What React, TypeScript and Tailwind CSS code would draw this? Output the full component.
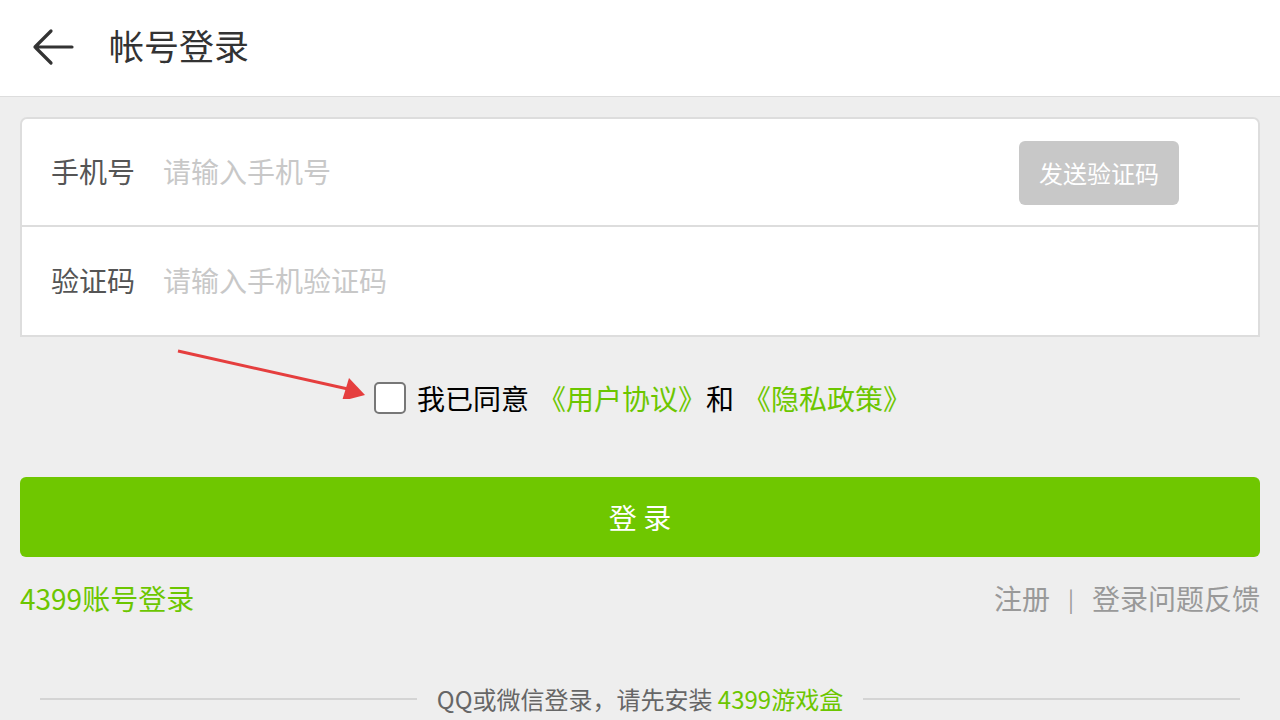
import React, { useState } from 'react';

const font = { fontFamily: '"Noto Sans CJK SC", "Noto Sans", sans-serif' };

const BackArrow = () => (
  <svg width="44" height="40" viewBox="0 0 44 40" fill="none" stroke="#333" strokeWidth="3.2" strokeLinecap="round" strokeLinejoin="round">
    <path d="M41 20H4M20 4L4 20l16 16" />
  </svg>
);

const App = () => {
  const [agreed, setAgreed] = useState(false);

  return (
    <div className="w-[1280px] h-[720px] overflow-hidden bg-[#eeeeee] flex flex-col" style={font}>
      <header className="h-[97px] bg-white border-b border-[#dddddd] flex items-center shrink-0">
        <div className="ml-[31px] mt-[-2px]">
          <BackArrow />
        </div>
        <h1 className="ml-[34px] text-[35px] leading-none text-[#333] mt-[-7px]">帐号登录</h1>
      </header>

      <main className="px-5 pt-5 flex flex-col">
        <div className="bg-white border-2 border-[#dddddd] rounded-t-[7px]">
          <div className="h-[108px] flex items-center pl-[29px] pr-[79px] border-b-2 border-[#dddddd]">
            <span className="text-[28px] text-[#555] w-[112px] mt-[-2px]">手机号</span>
            <span className="text-[28px] text-[#c8c8c8] flex-1 mt-[-2px]">请输入手机号</span>
            <button className="w-[160px] h-[64px] rounded-[6px] bg-[#c8c8c8] text-white text-[24px] mt-[1px]">发送验证码</button>
          </div>
          <div className="h-[108px] flex items-center pl-[29px]">
            <span className="text-[28px] text-[#555] w-[112px] mt-[-2px]">验证码</span>
            <span className="text-[28px] text-[#c8c8c8] mt-[-2px]">请输入手机验证码</span>
          </div>
        </div>

        <div className="relative h-[140px] flex items-start justify-center">
          <svg className="absolute left-[138px] top-[2px]" width="210" height="60" viewBox="0 0 210 60">
            <line x1="20" y1="12" x2="190" y2="50" stroke="#e53e3e" strokeWidth="3" />
            <polygon points="207,56 184,62 191,39" fill="#e53e3e" />
          </svg>
          <div className="flex items-center mt-[40px] ml-[5px]">
            <button
              onClick={() => setAgreed(!agreed)}
              className="w-[32px] h-[32px] rounded-[5px] border-2 border-[#777] bg-white mr-[11px]"
            />
            <span className="text-[28px] text-black">我已同意</span>
            <span className="text-[28px] text-[#6cc600] ml-[9px]">《用户协议》</span>
            <span className="text-[28px] text-black">和</span>
            <span className="text-[28px] text-[#6cc600] ml-[9px]">《隐私政策》</span>
          </div>
        </div>

        <button className="h-[80px] rounded-[6px] bg-[#6fc700] text-white text-[28px]">登 录</button>

        <div className="flex items-center justify-between mt-[20px]">
          <span className="text-[28px] text-[#6cc600]">4399账号登录</span>
          <div className="flex items-center text-[28px] text-[#999]">
            <span>注册</span>
            <span className="mx-[18px] text-[22px]">|</span>
            <span>登录问题反馈</span>
          </div>
        </div>

        <div className="flex items-center mt-[62px] px-5">
          <div className="flex-1 h-[2px] bg-[#d4d4d4]" />
          <span className="mx-5 text-[24px] text-[#666]">
            QQ或微信登录，请先安装 <span className="text-[#6cc600]">4399游戏盒</span>
          </span>
          <div className="flex-1 h-[2px] bg-[#d4d4d4]" />
        </div>
      </main>
    </div>
  );
};

export default App;
